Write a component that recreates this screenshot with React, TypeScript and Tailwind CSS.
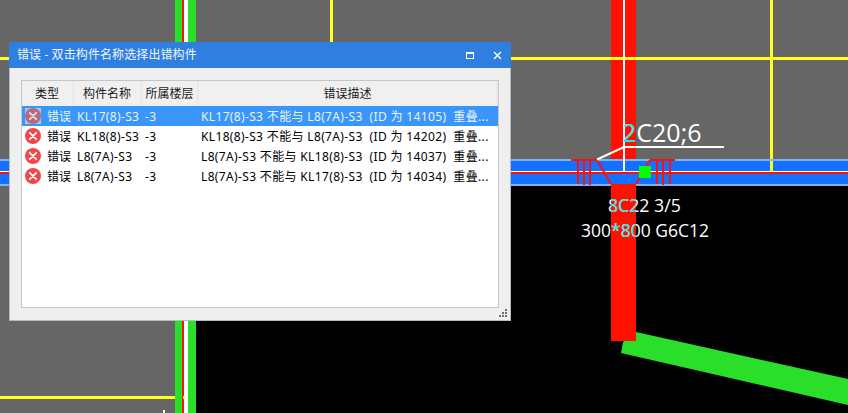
const ROWS = [
  { name: 'KL17(8)-S3', desc: 'KL17(8)-S3 不能与 L8(7A)-S3  (ID 为 14105)  重叠...' },
  { name: 'KL18(8)-S3', desc: 'KL18(8)-S3 不能与 L8(7A)-S3  (ID 为 14202)  重叠...' },
  { name: 'L8(7A)-S3', desc: 'L8(7A)-S3 不能与 KL18(8)-S3  (ID 为 14037)  重叠...' },
  { name: 'L8(7A)-S3', desc: 'L8(7A)-S3 不能与 KL17(8)-S3  (ID 为 14034)  重叠...' },
]

const HEADERS = ['类型', '构件名称', '所属楼层', '错误描述']

function CadLabels() {
  return (
    <g fontFamily="'Open Sans', sans-serif">
      <text x="622" y="142" fontSize="25">2C20;6</text>
      <text x="608" y="212" fontSize="17.700">8C22 3/5</text>
      <text x="581" y="237" fontSize="17.500">300*800 G6C12</text>
    </g>
  )
}

function CadDrawing() {
  return (
    <svg className="absolute inset-0" width="848" height="413" viewBox="0 0 848 413" shapeRendering="crispEdges">
      <defs>
        <clipPath id="on-column">
          <rect x="611" y="0" width="25" height="341" />
        </clipPath>
      </defs>
      <rect width="848" height="413" fill="#666666" />
      <rect x="196" y="186" width="652" height="227" fill="#000000" />

      {/* grid lines */}
      <rect x="0" y="57" width="848" height="3" fill="#ffff1e" />
      <rect x="330" y="0" width="3" height="160" fill="#ffff1e" />
      <rect x="770" y="0" width="3" height="172" fill="#ffff1e" />
      <rect x="0" y="396" width="185" height="3" fill="#ffff1e" />
      <rect x="163" y="410" width="2" height="3" fill="#ffffff" />

      {/* left column */}
      <rect x="175" y="0" width="21" height="413" fill="#2adf2a" />
      <rect x="182" y="0" width="2" height="413" fill="#ff1000" />
      <rect x="184" y="0" width="4" height="413" fill="#ffffff" />
      <rect x="183" y="396" width="2" height="3" fill="#ffff1e" />

      {/* beam */}
      <rect x="0" y="159" width="848" height="27" fill="#1470ff" />
      <rect x="0" y="159" width="848" height="2" fill="#7fb0f5" />
      <rect x="0" y="184" width="848" height="2" fill="#7fb0f5" />
      <rect x="770" y="161" width="3" height="10" fill="#ffff1e" />
      <rect x="0" y="171" width="848" height="1" fill="#ffffff" />
      <rect x="0" y="172" width="848" height="2" fill="#ff1000" />

      {/* diagonal beam and column */}
      <polygon points="636,332 848,379 848,405 621,353 623,342" fill="#2adf2a" shapeRendering="auto" />
      <rect x="611" y="0" width="25" height="159" fill="#ff1000" />
      <rect x="611" y="184" width="25" height="157" fill="#ff1000" />
      <rect x="623" y="0" width="2" height="172" fill="#ffffff" />
      <rect x="611" y="57" width="25" height="3" fill="#ffff1e" />
      <rect x="623" y="57" width="2" height="3" fill="#ffffff" />

      {/* rebar */}
      <g fill="#ff1000">
        <rect x="571" y="159" width="26" height="2" />
        <rect x="650" y="159" width="25" height="2" />
        <rect x="577" y="160" width="2" height="24" />
        <rect x="583" y="160" width="2" height="25" />
        <rect x="589" y="160" width="2" height="25" />
        <rect x="656" y="160" width="2" height="24" />
        <rect x="662" y="160" width="2" height="25" />
        <rect x="669" y="160" width="2" height="24" />
      </g>
      <path d="M597 160 L611 184 M650 160 L636 184" stroke="#ff1000" strokeWidth="2" fill="none" shapeRendering="auto" />
      <path d="M597 159.500 L624 147 H724" stroke="#ffffff" strokeWidth="2" fill="none" shapeRendering="auto" />
      <rect x="639" y="166" width="12" height="12" fill="#00ff00" />

      <g fill="#ffffff">
        <CadLabels />
      </g>
      <g fill="#22e6ee" clipPath="url(#on-column)">
        <CadLabels />
      </g>
    </svg>
  )
}

function ErrorIcon({ selected }: { selected: boolean }) {
  return (
    <svg width="16" height="16" viewBox="0 0 16 16" className={`shrink-0 ${selected ? 'bg-[#a9c6e6]' : ''}`}>
      <circle cx="8" cy="8" r="8" fill={selected ? '#b56a80' : '#f4474c'} />
      <path d="M4.800 4.800 L11.200 11.200 M11.200 4.800 L4.800 11.200" stroke={selected ? '#e6dce4' : '#ffffff'} strokeWidth="1.800" strokeLinecap="round" />
    </svg>
  )
}

function ErrorWindow() {
  return (
    <div className="absolute left-[9px] top-[42px] flex h-[279px] w-[502px] flex-col border-x border-b border-[#b4bac4] bg-[#efefef] font-['Noto_Sans','Noto_Sans_CJK_SC',sans-serif] text-xs text-black">
      <div className="-mx-px flex h-[26px] shrink-0 items-center justify-between bg-[#2f7fe0] pl-[8px] pr-[9px] text-[#f0f5fc]">
        <span className="leading-none tracking-[0.1px]">错误 - 双击构件名称选择出错构件</span>
        <div className="flex items-center gap-[19px]">
          <div className="h-[7px] w-[8px] border border-t-2 border-white" />
          <svg width="9" height="9" viewBox="0 0 9 9">
            <path d="M1 1 L8 8 M8 1 L1 8" stroke="#ffffff" strokeWidth="1.400" fill="none" />
          </svg>
        </div>
      </div>

      <div className="relative flex-1 px-[11px] py-[12px]">
        <div className="flex h-full flex-col border border-[#c6c6c6] bg-white">
          <div className="grid h-[25px] shrink-0 grid-cols-[52px_68px_57px_1fr] bg-[#e9e9e9]">
            {HEADERS.map((h) => (
              <div key={h} className="mr-[2px] flex items-center justify-center bg-[#f0f0f0] text-[#1a1a1a]">
                {h}
              </div>
            ))}
          </div>
          {ROWS.map((row, i) => {
            const selected = i === 0
            return (
              <div
                key={i}
                className={`grid h-[20px] grid-cols-[52px_68px_57px_1fr] items-center whitespace-nowrap tracking-[0.35px] ${selected ? 'bg-[#3a96f8] text-[#e8f2fe]' : ''}`}
              >
                <div className="flex items-center gap-[6px] pl-[3px]">
                  <ErrorIcon selected={selected} />
                  <span className="pt-px tracking-normal">错误</span>
                </div>
                <div className="pl-[3px] pt-px">{row.name}</div>
                <div className="pl-[3px] pt-px">-3</div>
                <div className="whitespace-pre pl-[2px] pt-px">{row.desc}</div>
              </div>
            )
          })}
        </div>
        <div className="absolute bottom-[3px] right-[3px] grid grid-cols-3 gap-px">
          {[0, 0, 1, 0, 1, 1, 1, 1, 1].map((on, i) => (
            <div key={i} className={`h-[2px] w-[2px] ${on ? 'bg-[#6e7278]' : ''}`} />
          ))}
        </div>
      </div>
    </div>
  )
}

export default function App() {
  return (
    <div className="relative h-[413px] w-[848px] overflow-hidden">
      <CadDrawing />
      <ErrorWindow />
    </div>
  )
}
